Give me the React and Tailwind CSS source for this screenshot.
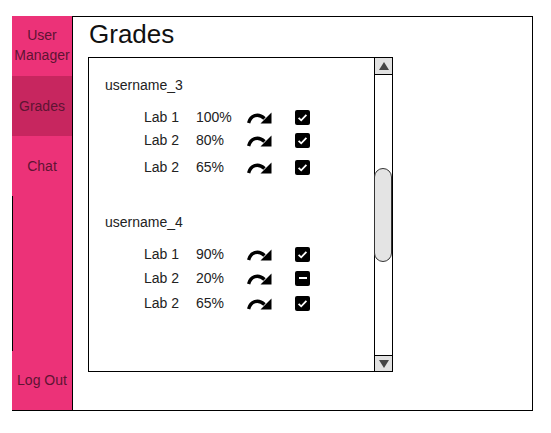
import React from 'react'

const GROUPS = [
  {
    user: 'username_3',
    gap: 'mt-0',
    rows: [
      { lab: 'Lab 1', score: '100%', done: true, mt: 'mt-4' },
      { lab: 'Lab 2', score: '80%', done: true, mt: 'mt-[7px]' },
      { lab: 'Lab 2', score: '65%', done: true, mt: 'mt-[11px]' },
    ],
  },
  {
    user: 'username_4',
    gap: 'mt-[39px]',
    rows: [
      { lab: 'Lab 1', score: '90%', done: true, mt: 'mt-4' },
      { lab: 'Lab 2', score: '20%', done: false, mt: 'mt-[8px]' },
      { lab: 'Lab 2', score: '65%', done: true, mt: 'mt-[9px]' },
    ],
  },
]

function ForwardArrow() {
  return (
    <svg width="25" height="13" viewBox="0 0 25 13">
      <path d="M1.6 12 C 3.5 4.5, 11 1.5, 17.5 7.5" fill="none" stroke="#000" strokeWidth="3.4" />
      <polygon points="24.5,1.5 24.5,12.5 13.5,12.5" fill="#000" />
    </svg>
  )
}

function Check({ done }) {
  return (
    <div className="w-[15px] h-[15px] bg-black rounded-[2px] flex items-center justify-center">
      {done ? (
        <svg width="13" height="13" viewBox="0 0 13 13">
          <path d="M2.6 6.8 L5.2 9.3 L10.4 3.8" fill="none" stroke="#fff" strokeWidth="1.8" />
        </svg>
      ) : (
        <div className="w-[8px] h-[2px] bg-white" />
      )}
    </div>
  )
}

export default function App() {
  return (
    <div className="w-[551px] h-[433px] bg-white pl-[12px] pt-[16px]" style={{ fontFamily: '"Liberation Sans", Arial, sans-serif' }}>
      <div className="flex w-[521px] h-[395px] border-b border-black">
        {/* sidebar */}
        <div className="w-[60px] flex flex-col bg-[#ec3278] text-[14px] text-[#5e1433] text-center">
          <div className="h-[60px] pt-[9px] leading-[20px] whitespace-nowrap overflow-hidden">
            <div>User</div>
            <div>Manager</div>
          </div>
          <div className="h-[60px] bg-[#c7265f] flex items-center justify-center">Grades</div>
          <div className="h-[60px] flex items-center justify-center">Chat</div>
          <div className="flex-1 border-l border-black" />
          <div className="h-[59px] flex items-center justify-center pb-[1px]">Log Out</div>
        </div>

        {/* main */}
        <div className="flex-1 border-l border-t border-r border-black pt-[4px]">
          <h1 className="pl-[16px] text-[26px] leading-[26px] text-[#111]">Grades</h1>
          <div className="ml-[15px] mt-[10px] w-[305px] h-[315px] border border-black flex">
            <div className="flex-1 pt-[19px] pl-[16px] text-[14px] leading-4 text-[#222]">
              {GROUPS.map((g) => (
                <div key={g.user} className={g.gap}>
                  <div className="h-4">{g.user}</div>
                  {g.rows.map((r, i) => (
                    <div key={i} className={`h-4 flex items-center pl-[39px] ${r.mt}`}>
                      <span className="w-[52px]">{r.lab}</span>
                      <span className="w-[51px]">{r.score}</span>
                      <ForwardArrow />
                      <div className="ml-[23px]">
                        <Check done={r.done} />
                      </div>
                    </div>
                  ))}
                </div>
              ))}
            </div>
            {/* scrollbar */}
            <div className="w-[18px] border-l border-black flex flex-col">
              <div className="h-[17px] bg-[#e1e1e1] border-b border-black flex items-center justify-center">
                <div className="w-0 h-0 border-l-[5px] border-r-[5px] border-b-[8px] border-l-transparent border-r-transparent border-b-[#444]" />
              </div>
              <div className="flex-1">
                <div className="mt-[93px] h-[94px] -ml-[1px] w-[18px] bg-[#e4e4e4] border border-[#333] rounded-[9px]" />
              </div>
              <div className="h-[16px] bg-[#e1e1e1] border-t border-black flex items-center justify-center">
                <div className="w-0 h-0 border-l-[5px] border-r-[5px] border-t-[8px] border-l-transparent border-r-transparent border-t-[#444]" />
              </div>
            </div>
          </div>
        </div>
      </div>
    </div>
  )
}
